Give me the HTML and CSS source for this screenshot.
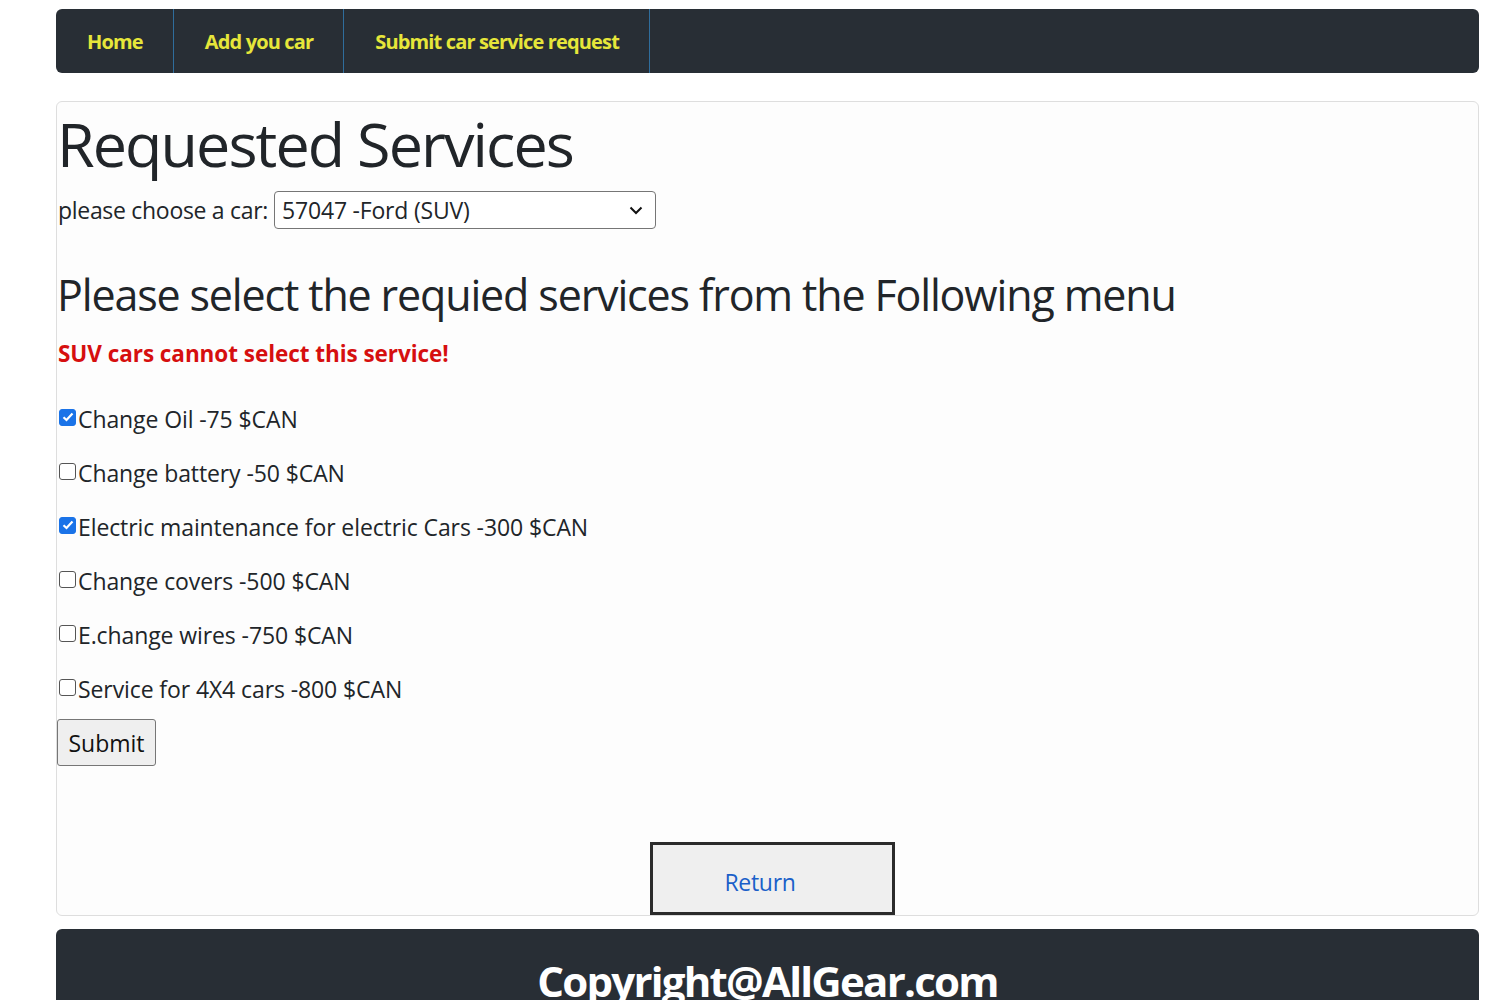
FILE: index.html
```html
<!DOCTYPE html>
<html lang="en">
<head>
<meta charset="utf-8">
<title>Requested Services</title>
<link rel="stylesheet" href="styles.css">
</head>
<body>
<nav class="topnav">
  <a class="navlink" href="#">Home</a>
  <a class="navlink" href="#">Add you car</a>
  <a class="navlink" href="#">Submit car service request</a>
</nav>
<main class="card">
  <h1 class="title">Requested Services</h1>
  <div class="car-row">
    <label class="car-label" for="car">please choose a car:</label>
    <div class="select-box">
      <span class="select-text">57047 -Ford (SUV)</span>
      <svg class="chev" width="14" height="9" viewBox="0 0 14 9"><path d="M1.5 1.5 L7 7 L12.5 1.5" fill="none" stroke="#111" stroke-width="2"/></svg>
    </div>
  </div>
  <h2 class="subtitle">Please select the requied services from the Following menu</h2>
  <p class="error">SUV cars cannot select this service!</p>
  <div class="services">
    <label class="svc"><span class="cb checked"><svg width="12" height="10" viewBox="0 0 12 10"><path d="M1.5 5.2 L4.5 8 L10.5 1.5" fill="none" stroke="#fff" stroke-width="2.2"/></svg></span>Change Oil -75 $CAN</label>
    <label class="svc"><span class="cb"></span>Change battery -50 $CAN</label>
    <label class="svc"><span class="cb checked"><svg width="12" height="10" viewBox="0 0 12 10"><path d="M1.5 5.2 L4.5 8 L10.5 1.5" fill="none" stroke="#fff" stroke-width="2.2"/></svg></span>Electric maintenance for electric Cars -300 $CAN</label>
    <label class="svc"><span class="cb"></span>Change covers -500 $CAN</label>
    <label class="svc"><span class="cb"></span>E.change wires -750 $CAN</label>
    <label class="svc"><span class="cb"></span>Service for 4X4 cars -800 $CAN</label>
  </div>
  <button class="submit" type="button">Submit</button>
  <div class="return-wrap">
    <a class="return" href="#">Return</a>
  </div>
</main>
<footer class="footer">
  <p class="copy">Copyright@AllGear.com</p>
</footer>
</body>
</html>
```
FILE: styles.css
```css
html, body {
  margin: 0;
  padding: 0;
  background: #ffffff;
  overflow: hidden;
  height: 1000px;
}
body {
  font-family: "Open Sans", "Noto Sans", sans-serif;
  color: #212529;
  padding: 9px 21px 0 56px;
}
.topnav {
  display: flex;
  height: 64px;
  background: #282e35;
  border-radius: 6px;
}
.navlink {
  display: flex;
  align-items: center;
  padding: 0 30px 0 31px;
  border-right: 1px solid #2f6d9c;
  color: #e6e63a;
  font-weight: 700;
  font-size: 20px;
  text-decoration: none;
  letter-spacing: -0.85px;
}
.card {
  margin-top: 28px;
  height: 813px;
  border: 1px solid #dedede;
  border-radius: 6px;
  background: #fdfdfd;
  padding: 0 0 0 1px;
  display: flex;
  flex-direction: column;
  align-items: flex-start;
}
.title {
  margin: 4px 0 0 -1px;
  font-size: 61px;
  font-weight: 500;
  line-height: 76px;
  letter-spacing: -1.9px;
}
.car-row {
  display: flex;
  align-items: center;
  margin-top: 9px;
  gap: 6px;
}
.car-label {
  font-size: 23px;
  letter-spacing: -0.3px;
  font-weight: 400;
}
.select-box {
  height: 36px;
  border: 1px solid #767676;
  border-radius: 4px;
  display: flex;
  align-items: center;
  justify-content: space-between;
  padding: 0 12px 0 7px;
  box-sizing: content-box;
  width: 361px;
  background: #fff;
}
.select-text {
  font-size: 23px;
  letter-spacing: -0.2px;
}
.subtitle {
  margin: 36px 0 0 -1px;
  font-size: 43px;
  font-weight: 500;
  line-height: 60px;
  letter-spacing: -1.15px;
}
.error {
  margin: 14px 0 0 0;
  color: #d60f0f;
  font-weight: 700;
  font-size: 22.5px;
  letter-spacing: -0.05px;
  line-height: 30px;
}
.services {
  margin-top: 23px;
  display: flex;
  flex-direction: column;
}
.svc {
  display: flex;
  align-items: center;
  height: 54px;
  font-size: 23px;
  letter-spacing: -0.1px;
}
.cb {
  width: 15px;
  height: 15px;
  margin: -4px 2px 0 1px;
  border: 1px solid #555;
  border-radius: 3px;
  background: #fff;
  display: inline-flex;
  align-items: center;
  justify-content: center;
}
.cb.checked {
  background: #1a73e8;
  border-color: #1a73e8;
}
.submit {
  margin-top: 3px;
  margin-left: -1px;
  width: 99px;
  height: 48px;
  background: #efefef;
  border: 1px solid #767676;
  border-radius: 3px;
  font-family: inherit;
  font-size: 23px;
  letter-spacing: 0;
  color: #111;
  padding: 0;
}
.return-wrap {
  align-self: stretch;
  display: flex;
  justify-content: center;
  margin-top: 76px;
  padding-left: 8px;
}
.return {
  border: 3px solid #2b2b2b;
  background: #efefef;
  display: flex;
  align-items: center;
  justify-content: center;
  padding-right: 24px;
  box-sizing: content-box;
  width: 215px;
  color: #1a5fc9;
  text-decoration: none;
  font-size: 23px;
  letter-spacing: -0.3px;
  padding-top: 6px;
  height: 61px;
}
.footer {
  margin-top: 13px;
  height: 120px;
  background: #282e35;
  border-radius: 6px 6px 0 0;
  display: flex;
  justify-content: center;
}
.copy {
  margin: 24px 0 0 0;
  color: #ffffff;
  font-weight: 700;
  font-size: 42px;
  letter-spacing: -1.75px;
  line-height: 56px;
}
```
